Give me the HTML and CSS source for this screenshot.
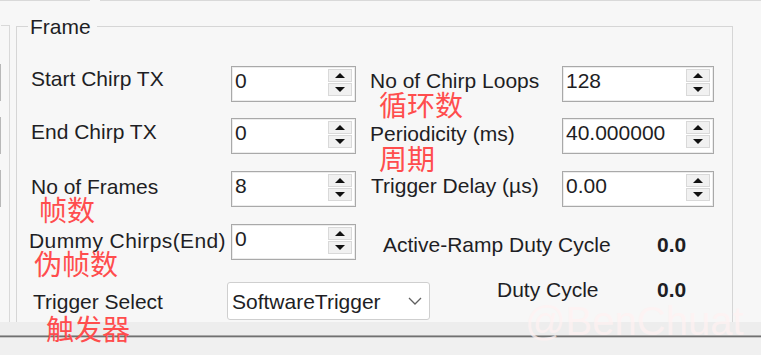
FILE: index.html
```html
<!DOCTYPE html>
<html lang="zh">
<head>
    <meta charset="UTF-8">
    <title>Frame Config</title>
    <link rel="stylesheet" href="styles.css">
</head>
<body>
    <div class="tabline"><span class="seg seg-a"></span><span class="seg seg-b"></span></div>

    <div class="workspace">
        <div class="side">
            <div class="stubs"><span></span><span></span><span></span></div>
            <div class="groupedge"></div>
        </div>

        <div class="frame">
            <div class="legend">Frame</div>
            <div class="grid">
                <!-- row 1 -->
                <div class="cell pad-2"><span class="lbl">Start Chirp TX</span></div>
                <div class="spin"><span class="val">0</span><span class="arrows"><span class="btn"><i class="up"></i></span><span class="btn"><i class="down"></i></span></span></div>
                <div class="cell pad-4">
                    <span class="lbl ml-14">No of Chirp Loops</span>
                    <span class="note note-loops">循环数</span>
                </div>
                <div class="spin"><span class="val">128</span><span class="arrows"><span class="btn"><i class="up"></i></span><span class="btn"><i class="down"></i></span></span></div>

                <!-- row 2 -->
                <div class="cell pad-3"><span class="lbl">End Chirp TX</span></div>
                <div class="spin"><span class="val">0</span><span class="arrows"><span class="btn"><i class="up"></i></span><span class="btn"><i class="down"></i></span></span></div>
                <div class="cell pad-5">
                    <span class="lbl ml-14">Periodicity (ms)</span>
                    <span class="note note-period">周期</span>
                </div>
                <div class="spin"><span class="val">40.000000</span><span class="arrows"><span class="btn"><i class="up"></i></span><span class="btn"><i class="down"></i></span></span></div>

                <!-- row 3 -->
                <div class="cell pad-5">
                    <span class="lbl">No of Frames</span>
                    <span class="note note-frames">帧数</span>
                </div>
                <div class="spin"><span class="val">8</span><span class="arrows"><span class="btn"><i class="up"></i></span><span class="btn"><i class="down"></i></span></span></div>
                <div class="cell pad-4"><span class="lbl ml-15">Trigger Delay (µs)</span></div>
                <div class="spin"><span class="val">0.00</span><span class="arrows"><span class="btn"><i class="up"></i></span><span class="btn"><i class="down"></i></span></span></div>

                <!-- row 4 -->
                <div class="cell pad-6">
                    <span class="lbl ml-n2 wide">Dummy Chirps(End)</span>
                    <span class="note note-dummy">伪帧数</span>
                </div>
                <div class="spin"><span class="val">0</span><span class="arrows"><span class="btn"><i class="up"></i></span><span class="btn"><i class="down"></i></span></span></div>
                <div class="cell pad-10"><span class="lbl ml-27">Active-Ramp Duty Cycle</span></div>
                <div class="cell pad-10"><span class="lbl value">0.0</span></div>

                <!-- row 5 -->
                <div class="cell pad-9">
                    <span class="lbl ml-2">Trigger Select</span>
                    <span class="note note-trigger">触发器</span>
                </div>
                <div class="select">
                    <span class="lbl">SoftwareTrigger</span>
                    <svg width="14" height="8" viewBox="0 0 14 8"><polyline points="1,1 7,7 13,1" fill="none" stroke="#606060" stroke-width="1.3"/></svg>
                </div>
                <div class="cell up-3"><span class="lbl ml-141">Duty Cycle</span></div>
                <div class="cell up-3"><span class="lbl value">0.0</span></div>
            </div>
        </div>
    </div>

    <div class="statusbar">
        <div class="band"></div>
        <div class="rule"></div>
        <div class="rest"></div>
    </div>

    <div class="watermark">@BenChuat</div>
</body>
</html>
```

FILE: styles.css
```css
body {
    position: relative;
    width: 761px;
    height: 355px;
    margin: 0;
    overflow: hidden;
    background: #f7f7f7;
    color: #1e1e24;
    font-family: "Liberation Sans", Arial, sans-serif;
    font-size: 21px;
}
.tabline {
    display: flex;
    height: 1px;
}
.seg {
    background: #d9d9d9;
}
.seg-a {
    width: 90px;
}
.seg-b {
    flex: 1;
    margin-left: 10px;
}
.workspace {
    display: flex;
    height: 321px;
}
.side {
    display: flex;
    flex: none;
    width: 16px;
}
.stubs {
    display: flex;
    flex-direction: column;
    gap: 16px;
    width: 1px;
    padding-top: 63px;
}
.stubs span {
    height: 37px;
    background: #b8b8b8;
}
.groupedge {
    box-sizing: border-box;
    width: 9px;
    margin-top: 24px;
    border-top: 1px solid #d9d9d9;
    border-right: 1px solid #d9d9d9;
}
.frame {
    box-sizing: border-box;
    flex: none;
    width: 717px;
    margin-top: 25px;
    border: 1px solid #d6d6d6;
    border-bottom: none;
}
.legend {
    width: fit-content;
    margin: -12px 0 0 11px;
    padding: 0 6px 0 2px;
    background: #f7f7f7;
    line-height: 24px;
}
.grid {
    display: grid;
    grid-template-columns: 200px 125px 206px 152px;
    grid-template-rows: 52px 53px 53px 58px 40px;
    margin: 27px 0 0 14px;
}
.cell {
    display: flex;
    flex-direction: column;
    align-items: flex-start;
}
.lbl {
    display: block;
    line-height: 21px;
    white-space: nowrap;
}
.wide {
    letter-spacing: 0.4px;
}
.pad-2 { padding-top: 2px; }
.pad-3 { padding-top: 3px; }
.pad-4 { padding-top: 4px; }
.pad-5 { padding-top: 5px; }
.pad-6 { padding-top: 6px; }
.pad-9 { padding-top: 9px; }
.pad-10 { padding-top: 10px; }
.up-3 { margin-top: -3px; }
.ml-n2 { margin-left: -2px; }
.ml-2 { margin-left: 2px; }
.ml-14 { margin-left: 14px; }
.ml-15 { margin-left: 15px; }
.ml-27 { margin-left: 27px; }
.ml-141 { margin-left: 141px; }
.value {
    margin-left: 95px;
    font-weight: bold;
}
.note {
    color: #ff4d4d;
    font-family: "Noto Sans CJK SC", sans-serif;
    font-size: 28px;
    line-height: 25px;
    white-space: nowrap;
}
.note-loops { margin: 1px 0 0 23px; }
.note-period { margin: 2px 0 0 23px; }
.note-frames { margin: 0 0 0 8px; }
.note-dummy { margin: 0 0 0 3px; }
.note-trigger { margin: 4px 0 0 15px; }
.spin {
    display: flex;
    justify-content: space-between;
    box-sizing: border-box;
    height: 36px;
    border: 1px solid #a9a9a9;
    background: #fff;
    box-shadow: inset 0 0 0 1px #ececec;
}
.val {
    padding: 2px 0 0 3px;
    line-height: 24px;
}
.arrows {
    display: flex;
    flex-direction: column;
    gap: 1px;
    margin: 2px 3px 0 0;
}
.btn {
    display: flex;
    align-items: center;
    justify-content: center;
    box-sizing: border-box;
    width: 24px;
    height: 13px;
    background: #f1f1f1;
    border: 1px solid #d9d9d9;
}
.up,
.down {
    width: 0;
    height: 0;
    border-left: 5px solid transparent;
    border-right: 5px solid transparent;
}
.up {
    border-bottom: 5px solid #111;
}
.down {
    border-top: 5px solid #111;
}
.select {
    display: flex;
    align-items: center;
    justify-content: space-between;
    box-sizing: border-box;
    width: 203px;
    height: 38px;
    margin-left: -4px;
    padding: 0 7px 0 4px;
    border: 1px solid #cfcfcf;
    border-radius: 3px;
    background: #fff;
}
.statusbar {
    height: 33px;
}
.band {
    height: 13px;
    background: #ededed;
}
.rule {
    height: 1px;
    background: #707070;
    border-top: 1px solid #a8a8a8;
    border-bottom: 1px solid #c8c8c8;
}
.rest {
    height: 17px;
    background: #f0f0f0;
}
.watermark {
    position: absolute;
    left: 525px;
    top: 301px;
    color: rgba(255, 242, 242, 0.75);
    font-size: 40px;
    line-height: 40px;
    white-space: nowrap;
}
```
